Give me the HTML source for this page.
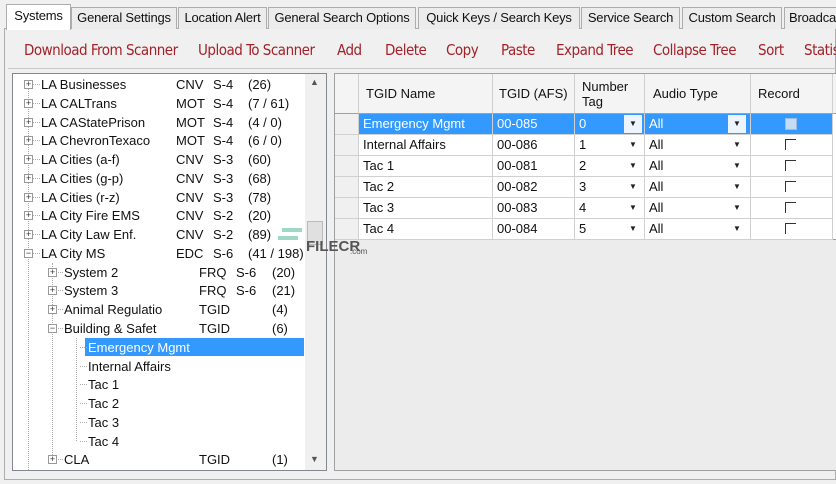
<!DOCTYPE html>
<html><head><style>
*{margin:0;padding:0;box-sizing:border-box}
body{width:836px;height:484px;background:#f0f0f0;font-family:"Liberation Sans",sans-serif;font-size:13px;color:#111;position:relative;overflow:hidden}
.a{position:absolute;white-space:nowrap}
.tab{position:absolute;top:7px;height:22px;border:1px solid #adadad;border-bottom:none;background:#ececec;font-size:13px;line-height:20px;text-align:center;letter-spacing:-0.2px}
.tb{position:absolute;top:41px;color:#a3222a;font-size:15px;font-family:"DejaVu Sans Condensed","Liberation Sans",sans-serif;letter-spacing:-0.5px}
.tree{position:absolute;left:12px;top:73px;width:315px;height:398px;background:#fff;border:1px solid #828790}
.r{position:absolute;height:19px;line-height:19px;font-size:13px}
.pm{position:absolute;width:9px;height:9px;border:1px solid #999;background:#fff;font-size:9px;line-height:7px;text-align:center;color:#333}
.grid{position:absolute;left:334px;top:73px;width:502px;height:167px;border:1px solid #a0a0a0;border-right:none;background:#fff}
.hd{position:absolute;top:0;height:40px;background:#f4f4f4;border-right:1px solid #d0d0d0;border-bottom:1px solid #a0a0a0;font-size:13px}
.c{position:absolute;height:21px;line-height:20px;border-right:1px solid #d0d0d0;border-bottom:1px solid #d0d0d0;font-size:13px;padding-left:4px}
.dd{position:absolute;width:18px;height:18px;top:1px;font-size:8px;text-align:center;line-height:18px;color:#222}
.cb{position:absolute;left:34px;top:4px;width:11px;height:11px;border-left:1px solid #333;border-top:1px solid #333}
</style></head><body>
<div style="position:absolute;left:4px;top:28px;width:832px;height:452px;border:1px solid #adadad;background:#f0f0f0"></div>
<div class="tab" style="left:71px;width:106px">General Settings</div>
<div class="tab" style="left:178px;width:89px">Location Alert</div>
<div class="tab" style="left:268px;width:148px">General Search Options</div>
<div class="tab" style="left:418px;width:162px">Quick Keys / Search Keys</div>
<div class="tab" style="left:581px;width:99px">Service Search</div>
<div class="tab" style="left:682px;width:100px">Custom Search</div>
<div class="tab" style="left:784px;width:60px;text-align:left;padding-left:4px">Broadcast</div>
<div class="tab" style="left:6px;top:4px;width:65px;height:26px;background:#fff;line-height:22px">Systems</div>
<div class="tb" style="left:24px">Download From Scanner</div>
<div class="tb" style="left:198px">Upload To Scanner</div>
<div class="tb" style="left:337px">Add</div>
<div class="tb" style="left:385px">Delete</div>
<div class="tb" style="left:446px">Copy</div>
<div class="tb" style="left:501px">Paste</div>
<div class="tb" style="left:556px">Expand Tree</div>
<div class="tb" style="left:653px">Collapse Tree</div>
<div class="tb" style="left:758px">Sort</div>
<div class="tb" style="left:804px">Statistics</div>
<div style="position:absolute;left:8px;top:68px;width:828px;height:407px;border-top:1px solid #c8c8c8"></div>

<div class="tree">
<div style="position:absolute;left:292px;top:0;width:21px;height:396px;background:#f0f0f0"></div>
<div class="a" style="left:297px;top:3px;font-size:9px;color:#555">▲</div>
<div class="a" style="left:297px;top:380px;font-size:9px;color:#555">▼</div>
<div style="position:absolute;left:294px;top:147px;width:16px;height:24px;background:#e0e0e0;border:1px solid #bbb"></div>
<div style="position:absolute;left:15px;top:10px;height:386px;border-left:1px dotted #aaa"></div>
<div style="position:absolute;left:39px;top:189px;height:196px;border-left:1px dotted #aaa"></div>
<div style="position:absolute;left:63px;top:264px;height:103px;border-left:1px dotted #aaa"></div>
<div style="position:absolute;left:72px;top:264px;width:219px;height:18px;background:#3399ff"></div>
</div>
<div id="rows"></div>
<script>
var T=[
[0,'+','LA Businesses','CNV','S-4','(26)'],
[0,'+','LA CALTrans','MOT','S-4','(7 / 61)'],
[0,'+','LA CAStatePrison','MOT','S-4','(4 / 0)'],
[0,'+','LA ChevronTexaco','MOT','S-4','(6 / 0)'],
[0,'+','LA Cities (a-f)','CNV','S-3','(60)'],
[0,'+','LA Cities (g-p)','CNV','S-3','(68)'],
[0,'+','LA Cities (r-z)','CNV','S-3','(78)'],
[0,'+','LA City Fire EMS','CNV','S-2','(20)'],
[0,'+','LA City Law Enf.','CNV','S-2','(89)'],
[0,'−','LA City MS','EDC','S-6','(41 / 198)'],
[1,'+','System 2','FRQ','S-6','(20)'],
[1,'+','System 3','FRQ','S-6','(21)'],
[1,'+','Animal Regulatio','TGID','','(4)'],
[1,'−','Building &amp; Safet','TGID','','(6)'],
[2,'','Emergency Mgmt','','',''],
[2,'','Internal Affairs','','',''],
[2,'','Tac 1','','',''],
[2,'','Tac 2','','',''],
[2,'','Tac 3','','',''],
[2,'','Tac 4','','',''],
[1,'+','CLA','TGID','','(1)']];
var h='';
T.forEach(function(t,i){var y=75+i*18.77;var L=t[0];
 var nx=[41,64,88][L],dx=[176,199,0][L],sx=[213,236,0][L],cx=[248,272,272][L];
 var px=[24,48,0][L];
 if(t[1])h+='<div class="pm" style="left:'+px+'px;top:'+(y+5)+'px">'+(t[1]=='+'?'+':'−')+'</div>';
 h+='<div class="a" style="left:'+(nx-8)+'px;top:'+(y+9)+'px;width:7px;border-top:1px dotted #aaa"></div>';
 var col=(i==14)?'#fff':'#111';
 h+='<div class="r a" style="left:'+nx+'px;top:'+y+'px;color:'+col+'">'+t[2]+'</div>';
 if(t[3])h+='<div class="r a" style="left:'+dx+'px;top:'+y+'px">'+t[3]+'</div>';
 if(t[4])h+='<div class="r a" style="left:'+sx+'px;top:'+y+'px">'+t[4]+'</div>';
 if(t[5])h+='<div class="r a" style="left:'+cx+'px;top:'+y+'px">'+t[5]+'</div>';
});
document.getElementById('rows').innerHTML=h;
</script>

<div class="grid">
<div class="hd" style="left:0;width:24px"></div>
<div class="hd" style="left:24px;width:134px;line-height:40px;padding-left:7px">TGID Name</div>
<div class="hd" style="left:158px;width:82px;line-height:40px;padding-left:6px">TGID (AFS)</div>
<div class="hd" style="left:240px;width:70px;padding:5px 0 0 7px;line-height:15px">Number<br>Tag</div>
<div class="hd" style="left:310px;width:106px;line-height:40px;padding-left:8px">Audio Type</div>
<div class="hd" style="left:416px;width:82px;line-height:40px;padding-left:7px">Record</div>
<div class="hd" style="left:498px;width:10px"></div>
<div id="g"></div>
</div>
<div style="position:absolute;left:334px;top:240px;width:502px;height:231px;background:#ececec;border-left:1px solid #a0a0a0;border-bottom:1px solid #a0a0a0"></div>
<div class="a" style="left:282px;top:228px;width:20px;height:4px;background:#9fd8c4"></div>
<div class="a" style="left:278px;top:236px;width:20px;height:4px;background:#9fd8c4"></div>
<div class="a" style="left:306px;top:238px;font-size:15px;font-weight:bold;color:#555">FILECR</div>
<div class="a" style="left:350px;top:247px;font-size:8px;color:#555">.com</div>
<script>
var G=[['Emergency Mgmt','00-085','0'],['Internal Affairs','00-086','1'],['Tac 1','00-081','2'],['Tac 2','00-082','3'],['Tac 3','00-083','4'],['Tac 4','00-084','5']];
var s='';
G.forEach(function(g,i){var y=40+i*21;var sel=i==0;var bg=sel?'#3399ff':'#fff',fc=sel?'#fff':'#111';
 s+='<div class="c" style="left:0;top:'+y+'px;width:24px;background:#f0f0f0"></div>';
 s+='<div class="c" style="left:24px;top:'+y+'px;width:134px;background:'+bg+';color:'+fc+'">'+g[0]+'</div>';
 s+='<div class="c" style="left:158px;top:'+y+'px;width:82px;background:'+bg+';color:'+fc+'">'+g[1]+'</div>';
 s+='<div class="c" style="left:240px;top:'+y+'px;width:70px;background:'+bg+';color:'+fc+'">'+g[2]+'<div class="dd" style="left:49px;background:'+(sel?'#eef4fb':'#fff')+'">▼</div></div>';
 s+='<div class="c" style="left:310px;top:'+y+'px;width:106px;background:'+bg+';color:'+fc+'">All<div class="dd" style="left:83px;background:'+(sel?'#eef4fb':'#fff')+'">▼</div></div>';
 s+='<div class="c" style="left:416px;top:'+y+'px;width:82px;background:'+bg+'">'+(sel?'<div style="position:absolute;left:34px;top:4px;width:12px;height:12px;background:#c4dcf4;border:1px solid #9bbde0"></div>':'<div class="cb"></div>')+'</div>';
});
document.getElementById('g').innerHTML=s;
</script>
</body></html>
